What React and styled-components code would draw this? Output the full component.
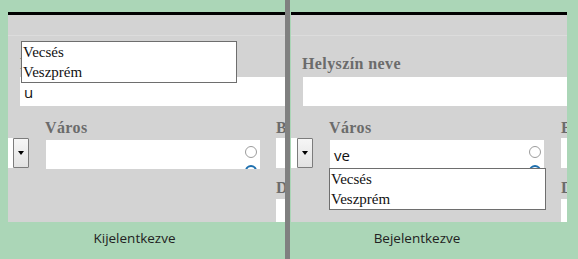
import React from "react";
import styled, { createGlobalStyle } from "styled-components";

const Global = createGlobalStyle`
  html, body { margin: 0; padding: 0; }
  body {
    width: 578px;
    height: 259px;
    overflow: hidden;
    background: #abd6b7;
    font-family: "Liberation Serif", serif;
  }
`;

const Page = styled.div`
  display: flex;
  height: 259px;
  padding-left: 8px;
  box-sizing: border-box;
`;

const Column = styled.div`
  width: ${(p) => p.$w}px;
  flex: none;
  display: flex;
  flex-direction: column;
  padding-top: 12px;
`;

const Divider = styled.div`
  width: 5px;
  flex: none;
  background: #808080;
  margin-right: 1px;
`;

const Panel = styled.div`
  position: relative;
  height: 210px;
  box-sizing: border-box;
  background: #d3d3d3;
  border-top: 3px solid #000;
  overflow: hidden;
`;

const Header = styled.div`
  height: 20px;
  border-bottom: 1px solid #dcdcdc;
`;

const Form = styled.div`
  padding: 18px 0 0 12px;
`;

const Field = styled.div`
  position: relative;
  display: flex;
  flex-direction: column;
  flex: none;
  margin-left: ${(p) => p.$ml || 0}px;
`;

const Label = styled.div`
  font-family: "Liberation Serif", serif;
  font-weight: bold;
  font-size: 16px;
  letter-spacing: 0.4px;
  line-height: 20px;
  height: 20px;
  color: #6b6b6b;
  white-space: nowrap;
  margin-top: ${(p) => p.$mt || 0}px;
  margin-left: ${(p) => p.$ml || 0}px;
`;

const TextBox = styled.div`
  display: flex;
  align-items: ${(p) => (p.$radios ? "flex-start" : "center")};
  box-sizing: border-box;
  background: #fff;
  height: ${(p) => p.$h || 29}px;
  width: ${(p) => p.$w}px;
  margin-top: ${(p) => p.$mt || 0}px;
  margin-left: ${(p) => p.$ml || 0}px;
  overflow: hidden;
  font-family: "Open Sans", "Liberation Sans", sans-serif;
  font-size: 15px;
  color: #111;
`;

const Value = styled.span`
  flex: 1;
  padding-left: 4px;
  display: flex;
  align-items: center;
  height: 29px;
`;

const RadioColumn = styled.div`
  flex: none;
  display: flex;
  flex-direction: column;
  gap: 7px;
  padding: 6px 3px 0 0;
`;

const Radio = styled.span`
  display: block;
  flex: none;
  width: 12px;
  height: 12px;
  box-sizing: border-box;
  border-radius: 50%;
  border: ${(p) => (p.$on ? "2.5px solid #1d6fae" : "1.5px solid #9c9c9c")};
  background: #fff;
`;

const Row = styled.div`
  display: flex;
  align-items: flex-start;
  margin: 12px 0 0 -12px;
`;

const Stub = styled.div`
  flex: none;
  width: ${(p) => p.$w}px;
  height: 30px;
  margin-top: 20px;
  background: #fff;
`;

const SelectButton = styled.div`
  flex: none;
  width: 16px;
  height: 30px;
  margin-top: 20px;
  box-sizing: border-box;
  border: 1px solid #7c7c7c;
  border-radius: 1px;
  background: linear-gradient(#f6f6f6, #e2e2e2);
  display: flex;
  align-items: center;
  justify-content: center;
`;

const Arrow = styled.span`
  width: 0;
  height: 0;
  border-left: 3.5px solid transparent;
  border-right: 3.5px solid transparent;
  border-top: 4px solid #000;
`;

const Suggestions = styled.ul`
  position: absolute;
  top: ${(p) => p.$top}px;
  left: ${(p) => p.$left}px;
  width: ${(p) => p.$w}px;
  margin: 0;
  padding: 0;
  list-style: none;
  background: #fff;
  border: 1px solid #6e6e6e;
  box-sizing: border-box;
  z-index: 2;
`;

const Suggestion = styled.li`
  font-family: "Liberation Serif", serif;
  font-size: 15px;
  line-height: 20px;
  height: 20px;
  padding-left: 1px;
  color: #111;
  white-space: nowrap;
`;

const Caption = styled.div`
  flex: 1;
  text-align: center;
  padding: 6px 24px 0 0;
  font-family: "Open Sans", "Liberation Sans", sans-serif;
  font-size: 13.5px;
  line-height: 20px;
  color: #222;
`;

const cities = ["Vecsés", "Veszprém"];

function SuggestionList({ top, left, w }) {
  return (
    <Suggestions $top={top} $left={left} $w={w}>
      {cities.map((c) => (
        <Suggestion key={c}>{c}</Suggestion>
      ))}
    </Suggestions>
  );
}

function FormPanel({ nameValue, cityValue, nameSuggest, citySuggest, stub, gap, labelShift }) {
  return (
    <Panel>
      <Header />
      <Form>
        <Field>
          <Label $ml={labelShift}>Helyszín neve</Label>
          <TextBox $w={400} $mt={3}>
            <Value>{nameValue}</Value>
          </TextBox>
          {nameSuggest && <SuggestionList top={-13} left={1} w={216} />}
        </Field>
        <Row>
          <Stub $w={stub} />
          <SelectButton>
            <Arrow />
          </SelectButton>
          <Field $ml={16}>
            <Label>Város</Label>
            <TextBox $w={214} $mt={2} $ml={1} $radios>
              <Value>{cityValue}</Value>
              <RadioColumn>
                <Radio />
                <Radio $on />
              </RadioColumn>
            </TextBox>
            {citySuggest && <SuggestionList top={50} left={0} w={217} />}
          </Field>
          <Field $ml={gap}>
            <Label>Bezárva</Label>
            <TextBox $w={120} $h={30} />
            <Label $mt={10}>Dátum</Label>
            <TextBox $w={120} $mt={1} />
          </Field>
        </Row>
      </Form>
    </Panel>
  );
}

export default function App() {
  return (
    <>
      <Global />
      <Page>
        <Column $w={277}>
          <FormPanel nameValue="u" cityValue="" nameSuggest stub={5} gap={16} labelShift={0} />
          <Caption>Kijelentkezve</Caption>
        </Column>
        <Divider />
        <Column $w={276}>
          <FormPanel nameValue="" cityValue="ve" citySuggest stub={6} gap={17} labelShift={-1} />
          <Caption>Bejelentkezve</Caption>
        </Column>
      </Page>
    </>
  );
}
